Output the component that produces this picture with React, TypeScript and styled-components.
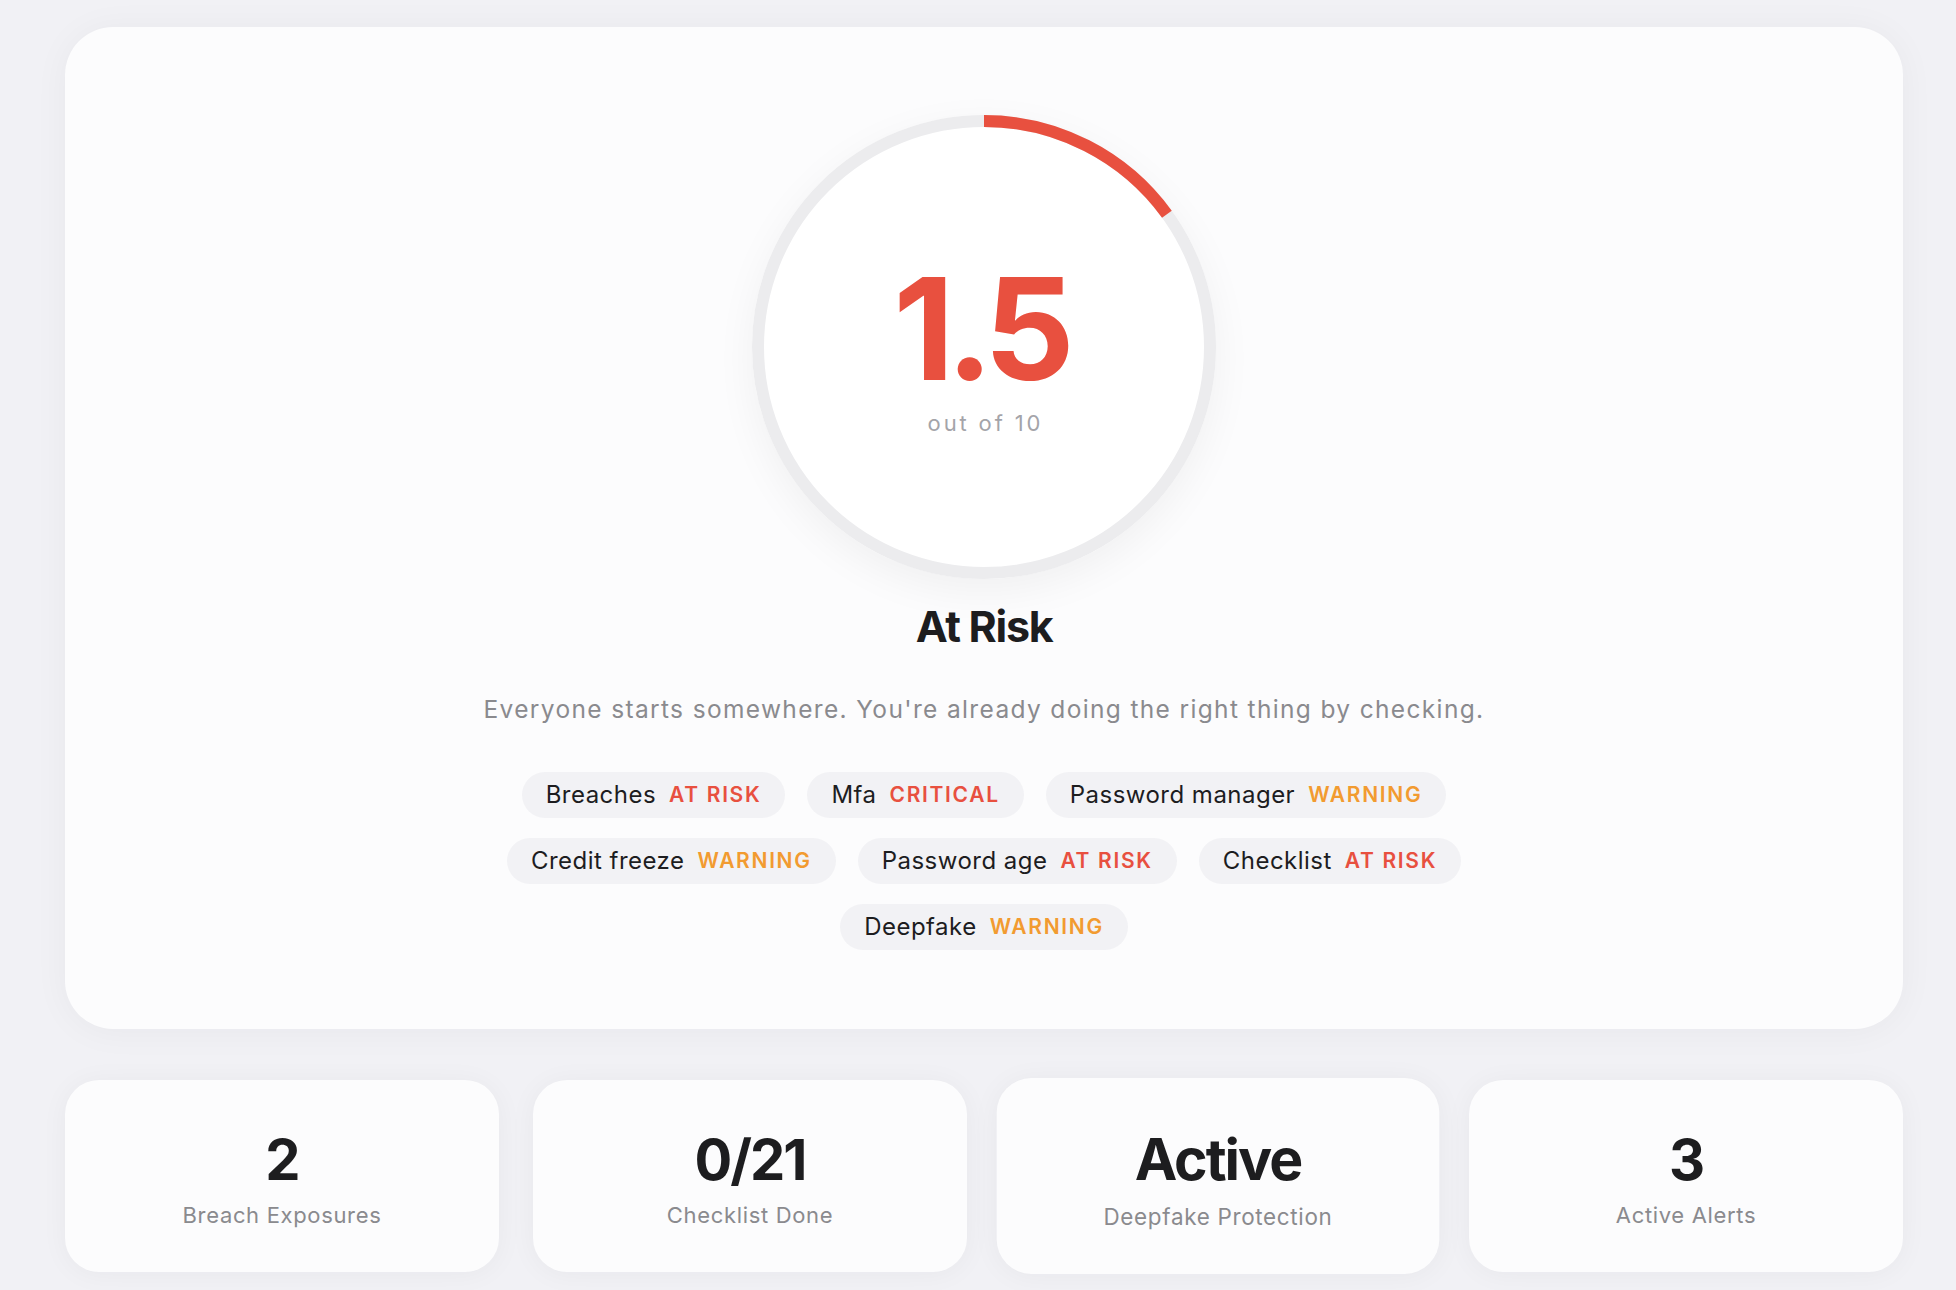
import styled, { createGlobalStyle } from 'styled-components'

const RED = '#e8503f'
const ORANGE = '#f29b30'

const GlobalStyle = createGlobalStyle`
  html, body {
    margin: 0;
    padding: 0;
    background: #f1f1f5;
  }
  body {
    font-family: Inter, 'Liberation Sans', sans-serif;
    color: #1d1d1f;
    -webkit-font-smoothing: antialiased;
  }
`

const Page = styled.div`
  padding: 27px 53px 40px 65px;
  display: flex;
  flex-direction: column;
  gap: 51px;
`

const ScoreCard = styled.section`
  background: #fcfcfd;
  border-radius: 48px;
  box-shadow: 0 2px 36px rgba(20, 20, 40, 0.045);
  padding: 88px 40px 79px;
  display: flex;
  flex-direction: column;
  align-items: center;
`

const Gauge = styled.div<{ size: number }>`
  width: ${p => p.size}px;
  height: ${p => p.size}px;
  display: grid;
  place-items: center;
  border-radius: 50%;
  background: #fff;
  box-shadow: 0 12px 40px rgba(0, 0, 0, 0.05);
  & > * {
    grid-area: 1 / 1;
  }
`

const GaugeText = styled.div`
  display: flex;
  flex-direction: column;
  align-items: center;
  padding-bottom: 10px;
`

const Score = styled.div<{ color: string }>`
  font-size: 142px;
  line-height: 1.15;
  font-weight: 700;
  letter-spacing: -0.06em;
  color: ${p => p.color};
  margin-left: -0.06em;
`

const OutOf = styled.div`
  font-size: 22px;
  line-height: 1.2;
  letter-spacing: 0.13em;
  margin-left: 0.13em;
  color: #a4a4a9;
`

const Title = styled.h2`
  margin: 22px 0 0;
  font-size: 43px;
  line-height: 1.2;
  font-weight: 700;
  letter-spacing: -0.03em;
`

const Description = styled.p`
  margin: 39px 0 0;
  font-size: 24.5px;
  line-height: 1.4;
  color: #8a8a8e;
  letter-spacing: 0.055em;
`

const Pills = styled.div`
  margin-top: 46px;
  max-width: 1080px;
  display: flex;
  flex-wrap: wrap;
  justify-content: center;
  gap: 20px 22px;
`

const Pill = styled.div`
  height: 46px;
  padding: 0 24px;
  border-radius: 23px;
  background: #f2f2f5;
  display: flex;
  align-items: center;
  gap: 13px;
`

const PillName = styled.span`
  font-size: 24px;
  letter-spacing: 0.02em;
  color: #1d1d1f;
`

const PillStatus = styled.span<{ color: string }>`
  font-size: 21px;
  font-weight: 600;
  letter-spacing: 0.08em;
  text-transform: uppercase;
  color: ${p => p.color};
`

const Stats = styled.div`
  display: grid;
  grid-template-columns: repeat(4, 1fr);
  gap: 34px;
`

const StatCard = styled.div<{ raised?: boolean }>`
  background: #fcfcfd;
  border-radius: 34px;
  box-shadow: 0 2px 28px rgba(20, 20, 40, 0.045);
  padding: 50px 20px 42px;
  display: flex;
  flex-direction: column;
  align-items: center;
  gap: 10px;
  transform: ${p => (p.raised ? 'scale(1.02)' : 'none')};
`

const StatValue = styled.div`
  font-size: 56px;
  line-height: 1.1;
  font-weight: 700;
  letter-spacing: -0.035em;
  color: #1d1d1f;
`

const StatLabel = styled.div`
  font-size: 22px;
  line-height: 1.3;
  color: #8a8a8e;
  letter-spacing: 0.03em;
`

const factors: { name: string; status: string }[] = [
  { name: 'Breaches', status: 'At risk' },
  { name: 'Mfa', status: 'Critical' },
  { name: 'Password manager', status: 'Warning' },
  { name: 'Credit freeze', status: 'Warning' },
  { name: 'Password age', status: 'At risk' },
  { name: 'Checklist', status: 'At risk' },
  { name: 'Deepfake', status: 'Warning' },
]

const stats = [
  { value: '2', label: 'Breach Exposures' },
  { value: '0/21', label: 'Checklist Done' },
  { value: 'Active', label: 'Deepfake Protection', raised: true },
  { value: '3', label: 'Active Alerts' },
]

const statusColor = (s: string) => (s === 'Warning' ? ORANGE : RED)

const ScoreRing = ({ score, size = 464, stroke = 12 }: { score: number; size?: number; stroke?: number }) => {
  const r = (size - stroke) / 2
  const c = 2 * Math.PI * r
  const len = (score / 10) * c
  return (
    <svg width={size} height={size} viewBox={`0 0 ${size} ${size}`}>
      <circle cx={size / 2} cy={size / 2} r={r} fill="none" stroke="#ececee" strokeWidth={stroke} />
      <circle
        cx={size / 2}
        cy={size / 2}
        r={r}
        fill="none"
        stroke={RED}
        strokeWidth={stroke}
        strokeDasharray={`${len} ${c}`}
        transform={`rotate(-90 ${size / 2} ${size / 2})`}
      />
    </svg>
  )
}

export default function App() {
  const score = 1.5
  return (
    <>
      <GlobalStyle />
      <Page>
        <ScoreCard>
          <Gauge size={464}>
            <ScoreRing score={score} />
            <GaugeText>
              <Score color={RED}>{score}</Score>
              <OutOf>out of 10</OutOf>
            </GaugeText>
          </Gauge>
          <Title>At Risk</Title>
          <Description>
            Everyone starts somewhere. You're already doing the right thing by checking.
          </Description>
          <Pills>
            {factors.map(f => (
              <Pill key={f.name}>
                <PillName>{f.name}</PillName>
                <PillStatus color={statusColor(f.status)}>{f.status}</PillStatus>
              </Pill>
            ))}
          </Pills>
        </ScoreCard>
        <Stats>
          {stats.map(s => (
            <StatCard key={s.label} raised={s.raised}>
              <StatValue>{s.value}</StatValue>
              <StatLabel>{s.label}</StatLabel>
            </StatCard>
          ))}
        </Stats>
      </Page>
    </>
  )
}
